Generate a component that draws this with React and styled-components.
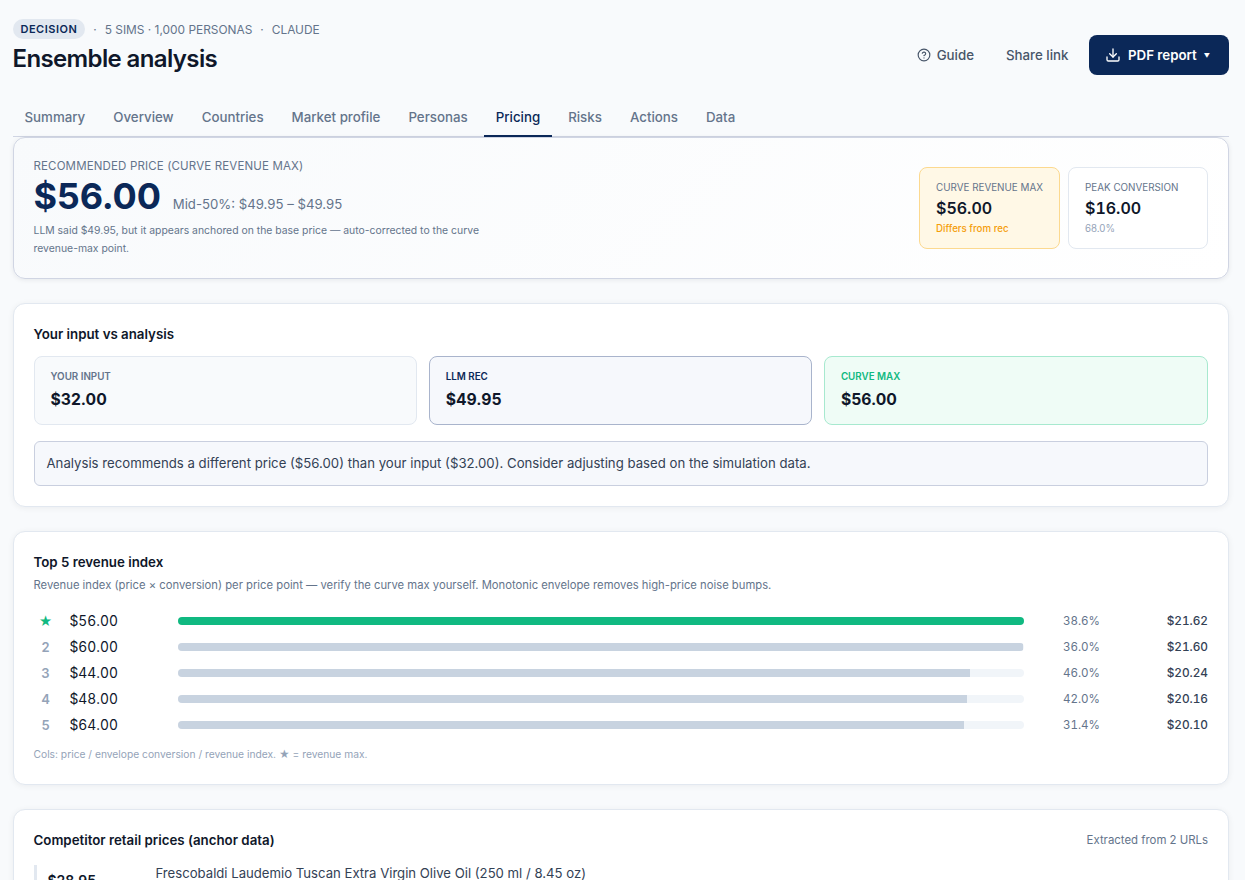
import React from 'react';
import styled, { createGlobalStyle } from 'styled-components';
import { Download, CircleHelp } from 'lucide-react';

const GlobalStyle = createGlobalStyle`
  html, body {
    margin: 0;
    height: 880px;
    overflow: hidden;
    background: #f8fafc;
  }
  body {
    font-family: Inter, "Liberation Sans", sans-serif;
    color: #0f172a;
  }
  * { box-sizing: border-box; }
`;

const Page = styled.div`
  padding: 0 16px 0 12.5px;
  height: 880px;
  overflow: hidden;
`;

const Header = styled.header`
  display: flex;
  justify-content: space-between;
  align-items: flex-start;
  height: 100px;
  padding-top: 19px;
`;

const MetaRow = styled.div`
  display: flex;
  align-items: center;
  height: 20px;
  font-size: 11.9px;
  color: #64748b;
`;

const Badge = styled.span`
  display: inline-flex;
  align-items: center;
  height: 20px;
  padding: 0 8px;
  margin-right: 8px;
  border-radius: 10px;
  background: #e2e8f0;
  color: #0b2858;
  font-size: 11px;
  font-weight: 600;
  letter-spacing: 0.5px;
`;

const Dot = styled.span`
  margin: 0 ${(p) => p.$gap}px;
`;

const Title = styled.h1`
  margin: 5px 0 0;
  font-size: 24px;
  line-height: 30px;
  font-weight: 600;
  letter-spacing: -0.62px;
  color: #0f172a;
`;

const Actions = styled.div`
  display: flex;
  align-items: center;
  margin-top: 16px;
`;

const GhostButton = styled.button`
  display: inline-flex;
  align-items: center;
  gap: 6px;
  height: 40px;
  padding: 0 16px;
  border: 0;
  background: transparent;
  color: #475569;
  font: 500 13.3px Inter, sans-serif;
`;

const PrimaryButton = styled.button`
  display: inline-flex;
  align-items: center;
  height: 40px;
  width: 140px;
  padding: 0 0 0 16px;
  margin-left: 4.5px;
  border: 0;
  border-radius: 8px;
  background: #0b2858;
  color: #fff;
  font: 600 13.3px Inter, sans-serif;
  svg { margin-right: 7px; }
`;

const Caret = styled.span`
  margin-left: 7px;
  font-size: 6px;
`;

const Tabs = styled.nav`
  display: flex;
  height: 37px;
  border-bottom: 1px solid #d0d5e3;
`;

const Tab = styled.div`
  display: flex;
  align-items: center;
  height: 37px;
  padding: 0 12px 2px;
  margin-right: 4px;
  font-size: 13.3px;
  font-weight: 500;
  color: ${(p) => (p.$active ? '#0b2858' : '#64748b')};
  border-bottom: 2px solid ${(p) => (p.$active ? '#0b2858' : 'transparent')};
`;

const Card = styled.section`
  background: #fff;
  border: 1px solid #e2e8f0;
  border-radius: 12px;
  box-shadow: 0 1px 6px rgba(15, 23, 42, 0.06);
  padding: 20px;
  margin-bottom: 24px;
`;

const HeroCard = styled(Card)`
  display: flex;
  justify-content: space-between;
  align-items: center;
  height: 142px;
  background: linear-gradient(135deg, #f8fafc 0%, #ffffff 100%);
  border-color: #d0d5e3;
  box-shadow: 0 1px 5px rgba(15, 23, 42, 0.08);
`;

const HeroLabel = styled.div`
  font-size: 11.5px;
  line-height: 16px;
  letter-spacing: 0.15px;
  color: #64748b;
`;

const HeroPriceRow = styled.div`
  display: flex;
  align-items: baseline;
  gap: 12px;
  margin-top: 1px;
`;

const HeroPrice = styled.div`
  font-size: 36px;
  line-height: 42px;
  font-weight: 700;
  letter-spacing: -0.2px;
  color: #0b2858;
`;

const HeroRange = styled.div`
  font-size: 13.2px;
  color: #64748b;
`;

const HeroNote = styled.p`
  width: 462px;
  margin: 5px 0 0;
  font-size: 10.4px;
  line-height: 18px;
  color: #64748b;
`;

const StatPair = styled.div`
  display: flex;
  gap: 8px;
`;

const StatBox = styled.div`
  width: ${(p) => (p.$warn ? 141 : 140)}px;
  height: 82px;
  padding: 12px 16px;
  border-radius: 8px;
  border: 1px solid ${(p) => (p.$warn ? '#fcd98f' : '#e2e8f0')};
  background: ${(p) => (p.$warn ? '#fff8e6' : '#fff')};
`;

const StatLabel = styled.div`
  font-size: 9.85px;
  line-height: 14px;
  white-space: nowrap;
  color: #64748b;
`;

const StatValue = styled.div`
  font-size: 16px;
  line-height: 22px;
  font-weight: 600;
  font-variant-numeric: tabular-nums;
  margin-top: 3px;
  color: #0f172a;
`;

const StatNote = styled.div`
  font-size: 9.7px;
  line-height: 14px;
  margin-top: 3px;
  font-weight: ${(p) => (p.$warn ? 500 : 400)};
  color: ${(p) => (p.$warn ? '#f59e0b' : '#94a3b8')};
`;

const CardTitle = styled.h2`
  margin: 0;
  font-size: 13.3px;
  line-height: 20px;
  font-weight: 600;
  color: #0f172a;
`;

const CompareGrid = styled.div`
  display: grid;
  grid-template-columns: 383.2px 383.2px 1fr;
  gap: 12px;
  margin-top: 12px;
`;

const tones = {
  input: { bg: '#f8fafc', border: '#e2e8f0', label: '#64748b' },
  rec: { bg: '#f6f8fc', border: '#a9b4cc', label: '#0b2858' },
  max: { bg: '#effcf6', border: '#a7e9cf', label: '#10b981' },
};

const CompareBox = styled.div`
  height: 69px;
  padding: 12px 16px;
  border-radius: 8px;
  border: 1px solid ${(p) => tones[p.$tone].border};
  background: ${(p) => tones[p.$tone].bg};
`;

const CompareLabel = styled.div`
  font-size: 9.8px;
  line-height: 16px;
  font-weight: 600;
  color: ${(p) => tones[p.$tone].label};
`;

const CompareValue = styled.div`
  font-size: 15.7px;
  line-height: 22px;
  font-weight: 700;
  margin-top: 4px;
  color: #0f172a;
`;

const Notice = styled.div`
  margin-top: 16px;
  height: 45px;
  padding: 0 12px 2px;
  display: flex;
  align-items: center;
  border: 1px solid #c9cfdf;
  border-radius: 6px;
  background: #f6f8fc;
  font-size: 13.2px;
  color: #334155;
`;

const CardNote = styled.p`
  margin: 5px 0 0;
  font-size: 11.25px;
  line-height: 16px;
  color: #64748b;
`;

const Rows = styled.div`
  margin-top: 15px;
`;

const Row = styled.div`
  display: grid;
  grid-template-columns: 24px 120px 1fr 76px 108px;
  align-items: center;
  height: 26px;
`;

const Rank = styled.span`
  text-align: center;
  font-size: 13px;
  font-weight: 600;
  color: ${(p) => (p.$top ? '#10b981' : '#94a3b8')};
`;

const RowPrice = styled.span`
  padding-left: 12px;
  font-size: 13.8px;
  font-variant-numeric: tabular-nums;
  color: #0f172a;
`;

const Track = styled.div`
  height: 8px;
  border-radius: 4px;
  background: #f1f5f9;
  overflow: hidden;
`;

const Fill = styled.div`
  height: 100%;
  background: ${(p) => (p.$top ? '#10b981' : '#c8d3e0')};
`;

const Conv = styled.span`
  text-align: right;
  font-size: 11.6px;
  font-variant-numeric: tabular-nums;
  color: #64748b;
`;

const Revenue = styled.span`
  text-align: right;
  font-size: 11.8px;
  font-weight: 500;
  font-variant-numeric: tabular-nums;
  color: #334155;
`;

const Legend = styled.p`
  margin: 8px 0 2px;
  font-size: 10.25px;
  line-height: 16px;
  color: #94a3b8;
`;

const CardHead = styled.div`
  display: flex;
  justify-content: space-between;
  align-items: center;
`;

const HeadNote = styled.span`
  font-size: 11.4px;
  color: #64748b;
`;

const CompetitorRow = styled.div`
  display: grid;
  grid-template-columns: 108px 1fr;
  margin-top: 15px;
  border-left: 3px solid #e2e8f0;
  padding-left: 11px;
`;

const CompetitorPrice = styled.span`
  font-size: 14px;
  font-weight: 600;
  padding-top: 7px;
  color: #0f172a;
`;

const CompetitorName = styled.span`
  font-size: 13.15px;
  line-height: 16px;
  color: #334155;
`;

const TABS = ['Summary', 'Overview', 'Countries', 'Market profile', 'Personas', 'Pricing', 'Risks', 'Actions', 'Data'];

const REVENUE = [
  { rank: '★', price: '$56.00', pct: 100, conv: '38.6%', rev: '$21.62' },
  { rank: '2', price: '$60.00', pct: 99.9, conv: '36.0%', rev: '$21.60' },
  { rank: '3', price: '$44.00', pct: 93.6, conv: '46.0%', rev: '$20.24' },
  { rank: '4', price: '$48.00', pct: 93.3, conv: '42.0%', rev: '$20.16' },
  { rank: '5', price: '$64.00', pct: 92.9, conv: '31.4%', rev: '$20.10' },
];

export default function App() {
  return (
    <Page>
      <GlobalStyle />
      <Header>
        <div>
          <MetaRow>
            <Badge>DECISION</Badge>
            <Dot $gap={0}>·</Dot>
            <Dot $gap={8}>5 SIMS · 1,000 PERSONAS</Dot>
            <Dot $gap={0}>·</Dot>
            <Dot $gap={8}>CLAUDE</Dot>
          </MetaRow>
          <Title>Ensemble analysis</Title>
        </div>
        <Actions>
          <GhostButton><CircleHelp size={14} />Guide</GhostButton>
          <GhostButton>Share link</GhostButton>
          <PrimaryButton>
            <Download size={16} />PDF report<Caret>▼</Caret>
          </PrimaryButton>
        </Actions>
      </Header>
      <Tabs>
        {TABS.map((t) => (
          <Tab key={t} $active={t === 'Pricing'}>{t}</Tab>
        ))}
      </Tabs>
      <HeroCard>
        <div>
          <HeroLabel>RECOMMENDED PRICE (CURVE REVENUE MAX)</HeroLabel>
          <HeroPriceRow>
            <HeroPrice>$56.00</HeroPrice>
            <HeroRange>Mid-50%: $49.95 – $49.95</HeroRange>
          </HeroPriceRow>
          <HeroNote>
            LLM said $49.95, but it appears anchored on the base price — auto-corrected to the curve revenue-max point.
          </HeroNote>
        </div>
        <StatPair>
          <StatBox $warn>
            <StatLabel>CURVE REVENUE MAX</StatLabel>
            <StatValue>$56.00</StatValue>
            <StatNote $warn>Differs from rec</StatNote>
          </StatBox>
          <StatBox>
            <StatLabel>PEAK CONVERSION</StatLabel>
            <StatValue>$16.00</StatValue>
            <StatNote>68.0%</StatNote>
          </StatBox>
        </StatPair>
      </HeroCard>
      <Card>
        <CardTitle>Your input vs analysis</CardTitle>
        <CompareGrid>
          <CompareBox $tone="input">
            <CompareLabel $tone="input">YOUR INPUT</CompareLabel>
            <CompareValue>$32.00</CompareValue>
          </CompareBox>
          <CompareBox $tone="rec">
            <CompareLabel $tone="rec">LLM REC</CompareLabel>
            <CompareValue>$49.95</CompareValue>
          </CompareBox>
          <CompareBox $tone="max">
            <CompareLabel $tone="max">CURVE MAX</CompareLabel>
            <CompareValue>$56.00</CompareValue>
          </CompareBox>
        </CompareGrid>
        <Notice>
          Analysis recommends a different price ($56.00) than your input ($32.00). Consider adjusting based on the simulation data.
        </Notice>
      </Card>
      <Card>
        <CardTitle>Top 5 revenue index</CardTitle>
        <CardNote>
          Revenue index (price × conversion) per price point — verify the curve max yourself. Monotonic envelope removes high-price noise bumps.
        </CardNote>
        <Rows>
          {REVENUE.map((r, i) => (
            <Row key={r.price}>
              <Rank $top={i === 0}>{r.rank}</Rank>
              <RowPrice>{r.price}</RowPrice>
              <Track>
                <Fill $top={i === 0} style={{ width: `${r.pct}%` }} />
              </Track>
              <Conv>{r.conv}</Conv>
              <Revenue>{r.rev}</Revenue>
            </Row>
          ))}
        </Rows>
        <Legend>Cols: price / envelope conversion / revenue index. ★ = revenue max.</Legend>
      </Card>
      <Card>
        <CardHead>
          <CardTitle>Competitor retail prices (anchor data)</CardTitle>
          <HeadNote>Extracted from 2 URLs</HeadNote>
        </CardHead>
        <CompetitorRow>
          <CompetitorPrice>$28.95</CompetitorPrice>
          <CompetitorName>Frescobaldi Laudemio Tuscan Extra Virgin Olive Oil (250 ml / 8.45 oz)</CompetitorName>
        </CompetitorRow>
      </Card>
    </Page>
  );
}
